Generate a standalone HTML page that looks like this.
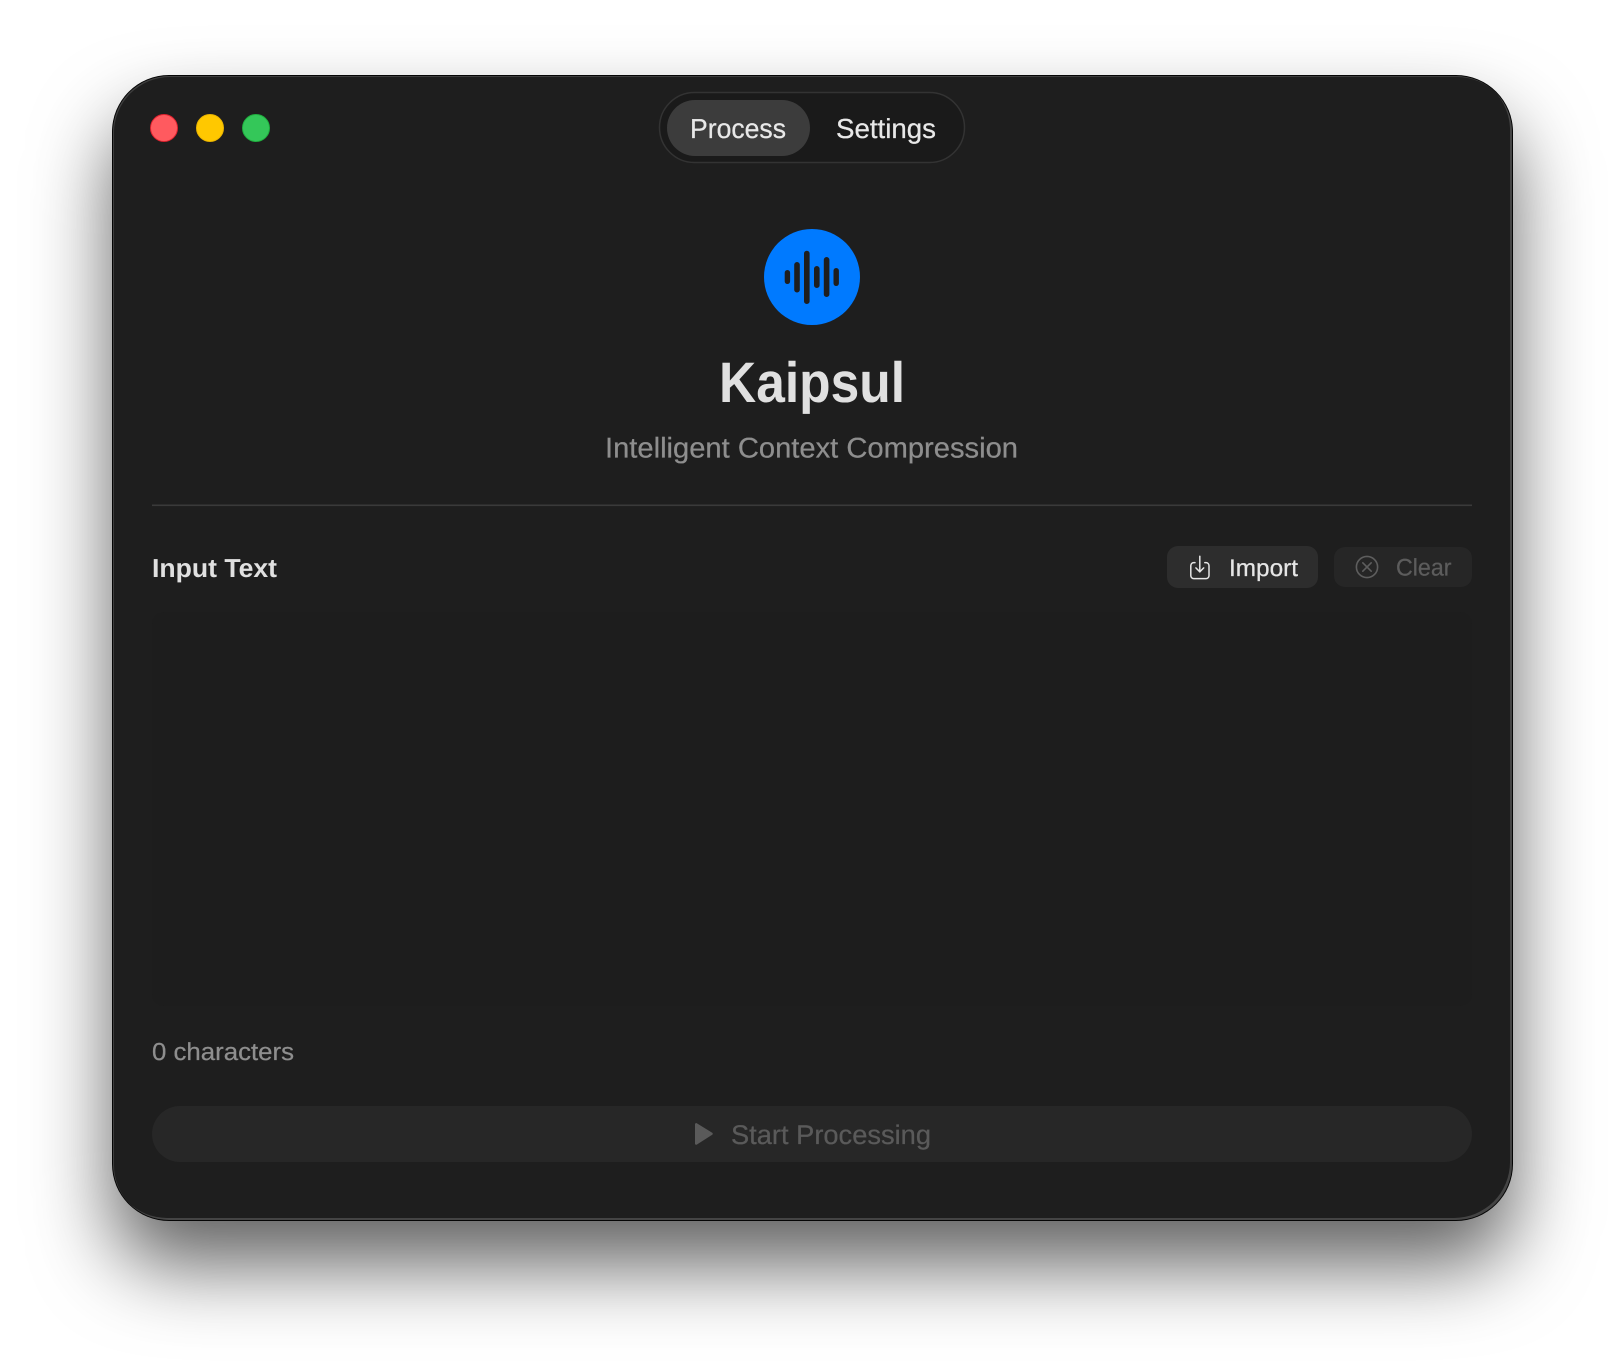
<!DOCTYPE html>
<html lang="en">
<head>
<meta charset="utf-8">
<title>Kaipsul</title>
<style>
html,body{margin:0;padding:0;width:1624px;height:1368px;background:#fff;overflow:hidden}
#win{position:absolute;left:113px;top:76px;width:1399px;height:1144px;box-sizing:border-box;background:#1e1e1e;border-radius:56px;
box-shadow:inset -2px -2px 0 0 #444,inset 1px 1px 0 0 #3e3e3e,0 0 0 1px #050505,0 45px 80px rgba(0,0,0,.62)}
svg{position:absolute;left:0;top:0}
text{font-family:"Liberation Sans",sans-serif;text-rendering:geometricPrecision}
</style>
</head>
<body>
<div id="win"></div>
<svg width="1624" height="1368" viewBox="0 0 1624 1368" xmlns="http://www.w3.org/2000/svg">
  <!-- traffic lights -->
  <circle cx="164" cy="128" r="13.5" fill="#ff5a5f" stroke="#e0212e" stroke-width="1"/>
  <circle cx="210" cy="128" r="13.5" fill="#ffc800" stroke="#eab400" stroke-width="1"/>
  <circle cx="256" cy="128" r="13.5" fill="#34c759" stroke="#1fae3e" stroke-width="1"/>

  <!-- segmented nav -->
  <rect x="659.5" y="92.5" width="305" height="70" rx="35" fill="#1a1a1a" stroke="#333" stroke-width="1.5"/>
  <rect x="667" y="100" width="143" height="56" rx="28" fill="#3c3c3c"/>
  <text x="690" y="138" font-size="27.5" fill="#e8e8e8" stroke="#e8e8e8" stroke-width=".25" textLength="96" lengthAdjust="spacingAndGlyphs">Process</text>
  <text x="836" y="138" font-size="27.5" fill="#e8e8e8" stroke="#e8e8e8" stroke-width=".25" textLength="100" lengthAdjust="spacingAndGlyphs">Settings</text>

  <!-- logo -->
  <circle cx="812" cy="277" r="48" fill="#007aff"/>
  <g fill="#1e1e1e">
    <rect x="784.7" y="270" width="5.4" height="14" rx="2.7"/>
    <rect x="794.2" y="262" width="5.6" height="30.5" rx="2.8"/>
    <rect x="804" y="250.7" width="5.6" height="53.3" rx="2.8"/>
    <rect x="814" y="266" width="5.6" height="22" rx="2.8"/>
    <rect x="823.8" y="257" width="5.6" height="40" rx="2.8"/>
    <rect x="833.5" y="268" width="5.4" height="18" rx="2.7"/>
  </g>

  <!-- heading -->
  <text x="719" y="402" font-size="57" font-weight="700" fill="#e0e0e0" textLength="186" lengthAdjust="spacingAndGlyphs">Kaipsul</text>
  <text x="605" y="457.5" font-size="28.5" fill="#8e8e8e" stroke="#8e8e8e" stroke-width=".25" textLength="413" lengthAdjust="spacingAndGlyphs">Intelligent Context Compression</text>

  <!-- divider -->
  <rect x="152" y="504.5" width="1320" height="1.6" fill="#3a3a3a"/>

  <!-- section header -->
  <text x="152" y="577" font-size="26" font-weight="700" fill="#e0e0e0" textLength="125" lengthAdjust="spacingAndGlyphs">Input Text</text>

  <!-- import -->
  <rect x="1167" y="546" width="151" height="42" rx="11" fill="#2d2d2d"/>
  <g fill="none" stroke="#e6e6e6" stroke-width="1.5" stroke-linecap="round" stroke-linejoin="round">
    <path d="M1195 562.6h-1.2a3 3 0 0 0-3 3v10a3 3 0 0 0 3 3h12.2a3 3 0 0 0 3-3v-10a3 3 0 0 0-3-3h-1.2"/>
    <path d="M1199.8 556.2v15.4"/>
    <path d="M1195.9 567.9l3.9 3.9 3.9-3.9"/>
  </g>
  <text x="1229" y="576" font-size="24" fill="#e6e6e6" stroke="#e6e6e6" stroke-width=".25" textLength="69" lengthAdjust="spacingAndGlyphs">Import</text>

  <!-- clear -->
  <rect x="1334" y="547" width="138" height="40" rx="11" fill="#262626"/>
  <g fill="none" stroke="#5e5e5e" stroke-width="1.6" stroke-linecap="round">
    <circle cx="1367" cy="567" r="10.6"/>
    <path d="M1362.8 562.8l8.4 8.4M1371.2 562.8l-8.4 8.4"/>
  </g>
  <text x="1396" y="575.5" font-size="24" fill="#5c5c5c" stroke="#5c5c5c" stroke-width=".25" textLength="55.5" lengthAdjust="spacingAndGlyphs">Clear</text>

  <!-- textarea -->
  <rect x="152" y="612" width="1320" height="394" rx="12" fill="#1d1d1d"/>

  <!-- char count -->
  <text x="152" y="1060" font-size="24.5" fill="#8e8e8e" stroke="#8e8e8e" stroke-width=".25" textLength="142" lengthAdjust="spacingAndGlyphs">0 characters</text>

  <!-- start button -->
  <rect x="152" y="1106" width="1320" height="56" rx="28" fill="#272727"/>
  <path d="M695 1124.2a1.2 1.2 0 0 1 1.8-1l15.4 9.6a1.2 1.2 0 0 1 0 2l-15.4 9.8a1.2 1.2 0 0 1-1.8-1z" fill="#5a5a5a"/>
  <text x="731" y="1144" font-size="27" fill="#5a5a5a" stroke="#5a5a5a" stroke-width=".25" textLength="200" lengthAdjust="spacingAndGlyphs">Start Processing</text>
</svg>
</body>
</html>
